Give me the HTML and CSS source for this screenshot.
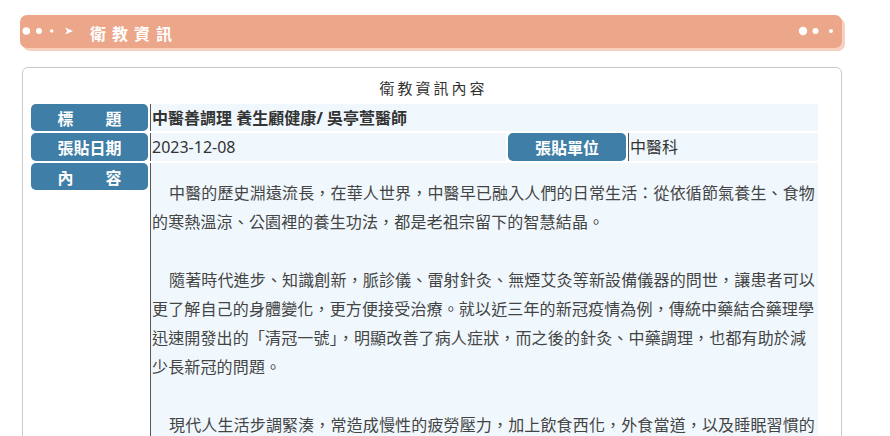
FILE: index.html
```html
<!DOCTYPE html>
<html lang="zh-Hant">
<head>
<meta charset="utf-8">
<title>衛教資訊</title>
<link rel="stylesheet" href="styles.css">
</head>
<body>
<div class="page">
  <div class="banner">
    <svg class="banner-dots-left" width="56" height="33" viewBox="0 0 56 33" aria-hidden="true">
      <circle cx="6.3" cy="16" r="3.8" fill="#fff"/>
      <circle cx="19" cy="16" r="3" fill="#fff"/>
      <circle cx="31.7" cy="16" r="1.8" fill="#fff"/>
      <polygon points="45,12.5 53,16 45,19.5 47.2,16" fill="#fff"/>
    </svg>
    <h1 class="banner-title">衛教資訊</h1>
    <svg class="banner-dots-right" width="50" height="33" viewBox="0 0 50 33" aria-hidden="true">
      <circle cx="11" cy="16" r="4.2" fill="#fff"/>
      <circle cx="23.5" cy="16" r="3" fill="#fff"/>
      <circle cx="39" cy="16" r="2" fill="#fff"/>
    </svg>
  </div>

  <div class="panel">
    <div class="panel-title">衛教資訊內容</div>
    <div class="info-grid">
      <div class="label">標　　題</div>
      <div class="value value-wide value-strong">中醫善調理 養生顧健康/ 吳亭萱醫師</div>

      <div class="label">張貼日期</div>
      <div class="value">2023-12-08</div>
      <div class="label">張貼單位</div>
      <div class="value">中醫科</div>

      <div class="label label-top">內　　容</div>
      <div class="value value-wide content">
        <p>中醫的歷史淵遠流長，在華人世界，中醫早已融入人們的日常生活：從依循節氣養生、食物的寒熱溫涼、公園裡的養生功法，都是老祖宗留下的智慧結晶。</p>
        <p>隨著時代進步、知識創新，脈診儀、雷射針灸、無煙艾灸等新設備儀器的問世，讓患者可以更了解自己的身體變化，更方便接受治療。就以近三年的新冠疫情為例，傳統中藥結合藥理學迅速開發出的「清冠一號」，明顯改善了病人症狀，而之後的針灸、中藥調理，也都有助於減少長新冠的問題。</p>
        <p>現代人生活步調緊湊，常造成慢性的疲勞壓力，加上飲食西化，外食當道，以及睡眠習慣的改變，使得許多人長期處於亞健康狀態。</p>
      </div>
    </div>
  </div>
</div>
</body>
</html>
```

FILE: styles.css
```css
html, body {
  margin: 0;
  padding: 0;
  background: #ffffff;
}

body {
  font-family: "Noto Sans", "Noto Sans CJK TC", sans-serif;
  color: #333333;
}

.page {
  padding: 15px 0 0 20px;
  width: 822px;
}

/* ---------- banner ---------- */
.banner {
  display: flex;
  align-items: center;
  height: 33px;
  background: #eca68a;
  border-radius: 7px;
  box-shadow: 3px 3px 0 #f7d0c0;
}

.banner-dots-left,
.banner-dots-right {
  display: block;
  flex: none;
}

.banner-dots-right {
  margin-left: auto;
}

.banner-title {
  margin: 2px 0 0 14px;
  font-family: "Noto Sans CJK TC", sans-serif;
  font-size: 16px;
  font-weight: 700;
  letter-spacing: 6px;
  line-height: 20px;
  color: #ffffff;
}

/* ---------- panel ---------- */
.panel {
  margin: 19px 0 0 2px;
  width: 818px;
  height: 400px;
  border: 1px solid #cccccc;
  border-radius: 6px;
  box-shadow: 0 0 2px rgba(0, 0, 0, 0.08);
  padding-top: 9px;
}

.panel-title {
  text-align: center;
  font-family: "Noto Sans CJK TC", sans-serif;
  font-size: 15px;
  letter-spacing: 3px;
  text-indent: 3px;
  line-height: 22px;
  color: #333333;
}

.info-grid {
  display: grid;
  grid-template-columns: 117px 356px 118px 190px;
  grid-template-rows: 27px 28px auto;
  gap: 2px;
  margin: 5px 0 0 8px;
}

.label {
  display: flex;
  align-items: center;
  justify-content: center;
  background: #3f7ea6;
  border-radius: 5px;
  color: #ffffff;
  font-family: "Noto Sans CJK TC", sans-serif;
  font-size: 16px;
  font-weight: 700;
  line-height: 20px;
}

.label-top {
  align-self: start;
  height: 27px;
}

.value {
  display: flex;
  align-items: center;
  background: #f0f8fd;
  border-left: 1px solid #555555;
  padding-left: 1px;
  font-size: 16px;
  line-height: 20px;
  color: #333333;
}

.value-wide {
  grid-column: span 3;
}

.value-strong {
  font-weight: 700;
}

.content {
  display: block;
  padding: 15px 0 40px 1px;
  font-family: "Noto Sans CJK TC", sans-serif;
  line-height: 29px;
  letter-spacing: 0.15px;
  color: #444444;
}

.content p {
  margin: 0 0 29px;
  text-indent: 17px;
}
```
